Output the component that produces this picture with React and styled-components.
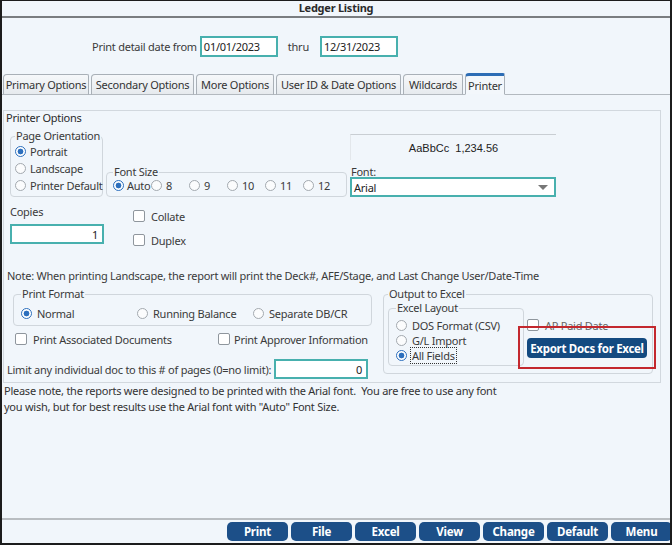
import React from "react";
import styled, { createGlobalStyle } from "styled-components";

const GlobalStyle = createGlobalStyle`
  * { box-sizing: border-box; }
  html, body { margin: 0; padding: 0; background: #f1f6fb; }
  body {
    font-family: "Noto Sans", "Open Sans", sans-serif;
    font-size: 11px;
    letter-spacing: -0.25px;
    color: #3a3a3a;
  }
`;

const Window = styled.div`
  width: 672px;
  height: 545px;
  display: flex;
  flex-direction: column;
  background: #f1f6fb;
  border-style: solid;
  border-color: #1c1c1c;
  border-width: 1px 2px 2px 2px;
  overflow: hidden;
`;

const TitleBar = styled.div`
  height: 17px;
  line-height: 14px;
  text-align: center;
  font-weight: 700;
  font-size: 11px;
  color: #2a2a2a;
  border-bottom: 2px solid #7a7d80;
`;

const DateRow = styled.div`
  display: flex;
  align-items: center;
  padding: 17px 0 15px 90px;
  height: 54px;
`;

const Label = styled.span`
  white-space: nowrap;
  margin-right: ${(p) => p.$gap || 0}px;
`;

const Field = styled.div`
  width: ${(p) => p.$w}px;
  height: ${(p) => p.$h || 21}px;
  border: 2px solid #48b0ae;
  background: #fff;
  padding: 0 4px 0 2px;
  display: flex;
  align-items: center;
  justify-content: ${(p) => (p.$right ? "flex-end" : "flex-start")};
  color: #222;
`;

const TabStrip = styled.div`
  height: 23px;
  display: flex;
  align-items: flex-end;
  gap: 2px;
  padding-left: 1px;
  border-bottom: 1px solid #b3b9bf;
`;

const Tab = styled.div`
  width: ${(p) => p.$w}px;
  height: ${(p) => (p.$active ? 22 : 21)}px;
  margin-bottom: -1px;
  display: flex;
  align-items: center;
  justify-content: center;
  white-space: nowrap;
  color: #333;
  border: 1px solid #a9b0b7;
  border-bottom: ${(p) => (p.$active ? "1px solid #f1f6fb" : "1px solid #b3b9bf")};
  border-top: ${(p) => (p.$active ? "3px solid #2d6db5" : "1px solid #a9b0b7")};
  border-radius: 4px 2px 0 0;
  background: ${(p) =>
    p.$active ? "#f3f7fb" : "linear-gradient(#f6f8fa, #e6eaee)"};
`;

const Content = styled.div`
  flex: 1;
  padding: 15px 0 0 1px;
  display: flex;
  flex-direction: column;
`;

const Panel = styled.div`
  width: 658px;
  height: 273px;
  border: 1px solid #d2d8de;
  padding: 0 0 0 1px;
  display: flex;
  flex-direction: column;
`;

const PanelTitle = styled.div`
  line-height: 14px;
  padding-left: 1px;
  color: #2a2a2a;
`;

const Row = styled.div`
  display: flex;
  align-items: ${(p) => p.$align || "flex-start"};
  gap: ${(p) => p.$gap || 0}px;
  margin-top: ${(p) => p.$mt || 0}px;
  padding-left: ${(p) => p.$pl || 0}px;
`;

const Column = styled.div`
  display: flex;
  flex-direction: column;
  margin-top: ${(p) => p.$mt || 0}px;
  width: ${(p) => (p.$w ? `${p.$w}px` : "auto")};
`;

const Group = styled.fieldset`
  margin: 0 0 0 ${(p) => p.$ml || 0}px;
  min-width: 0;
  width: ${(p) => (p.$w ? `${p.$w}px` : "auto")};
  padding: 0 ${(p) => p.$pr ?? 4}px ${(p) => p.$pb ?? 2}px ${(p) => p.$pl ?? 3}px;
  border: 1px solid #d0d6dc;
  border-radius: 4px;
  align-self: ${(p) => p.$self || "auto"};
`;

const Legend = styled.legend`
  padding: 0 1px;
  line-height: 14px;
  white-space: nowrap;
  color: #3a3a3a;
`;

const RadioItem = styled.div`
  display: flex;
  align-items: center;
  gap: ${(p) => p.$gap ?? 5}px;
  height: ${(p) => p.$h || 17}px;
  width: ${(p) => (p.$w ? `${p.$w}px` : "auto")};
  overflow: ${(p) => (p.$w ? "hidden" : "visible")};
  white-space: nowrap;
  flex-shrink: 0;
  color: ${(p) => (p.$muted ? "#666" : "inherit")};
`;

const Dot = styled.span`
  width: 11px;
  height: 11px;
  border-radius: 50%;
  flex-shrink: 0;
  border: 1px solid ${(p) => (p.$on ? "#2c6fbd" : "#a3a9af")};
  background: ${(p) =>
    p.$on
      ? "radial-gradient(circle, #2c6fbd 0 2.6px, #ffffff 3.2px)"
      : "#fbfcfd"};
`;

const Box = styled.span`
  width: 12px;
  height: 12px;
  flex-shrink: 0;
  border: 1px solid #8f969d;
  border-radius: 2px;
  background: #fff;
`;

const Focus = styled.span`
  outline: 1px dotted #333;
  padding: 0 1px;
`;

const Radio = ({ on, children, w, h, gap }) => (
  <RadioItem $w={w} $h={h} $gap={gap}>
    <Dot $on={on} />
    <span>{children}</span>
  </RadioItem>
);

const Check = ({ children, w, h, gap = 6, muted }) => (
  <RadioItem $w={w} $h={h} $gap={gap} $muted={muted}>
    <Box />
    <span>{children}</span>
  </RadioItem>
);

const Preview = styled.div`
  height: 26px;
  border-top: 1px solid #c9ced3;
  border-left: 1px solid #e3e7eb;
  display: flex;
  align-items: center;
  justify-content: center;
  font-family: "Liberation Sans", Arial, sans-serif;
  font-size: 11px;
  letter-spacing: 0;
  color: #222;
  white-space: pre;
`;

const FontLabel = styled.div`
  line-height: 11px;
  margin-top: 6px;
  padding-left: 1px;
`;

const Select = styled.div`
  height: 20px;
  border: 2px solid #48b0ae;
  background: #fff;
  display: flex;
  align-items: center;
  justify-content: space-between;
  padding: 0 6px 0 2px;
  color: #222;
`;

const Arrow = styled.span`
  width: 0;
  height: 0;
  border-left: 5px solid transparent;
  border-right: 5px solid transparent;
  border-top: 5px solid #777;
`;

const Note = styled.div`
  line-height: 14px;
  padding-left: 2px;
  margin-top: ${(p) => p.$mt || 0}px;
  white-space: pre;
`;

const Footnote = styled.div`
  padding-left: 1px;
  line-height: 16px;
  white-space: pre;
  color: #333;
`;

const Spacer = styled.div`
  flex: 1;
`;

const Footer = styled.div`
  height: 25px;
  border-top: 2px solid #b9bdc1;
  display: flex;
  align-items: flex-start;
  gap: 3px;
  padding: 2px 0 0 225px;
`;

const FooterButton = styled.button`
  flex-shrink: 0;
  width: 61px;
  height: 19px;
  border: none;
  border-radius: 5px;
  background: #1c4f88;
  color: #fff;
  font-family: "Noto Sans", sans-serif;
  font-weight: 700;
  font-size: 11.5px;
  letter-spacing: -0.2px;
  padding: 0;
  line-height: 19px;
`;

const Highlight = styled.div`
  position: relative;
  margin-top: 6px;
  &::after {
    content: "";
    position: absolute;
    inset: -12px -9px -11px -9px;
    border: 2px solid #c3282e;
    pointer-events: none;
  }
`;

const ExportButton = styled.button`
  width: 120px;
  height: 20px;
  border: none;
  border-radius: 4px;
  background: #134a80;
  color: #fff;
  font-family: "Noto Sans", sans-serif;
  font-weight: 700;
  font-size: 11.5px;
  letter-spacing: -0.3px;
  padding: 0;
`;

const tabs = [
  ["Primary Options", 86],
  ["Secondary Options", 103],
  ["More Options", 78],
  ["User ID & Date Options", 125],
  ["Wildcards", 60],
];

const sizes = ["Auto", "8", "9", "10", "11", "12"];

export default function App() {
  return (
    <>
      <GlobalStyle />
      <Window>
        <TitleBar>Ledger Listing</TitleBar>
        <DateRow>
          <Label $gap={3}>Print detail date from</Label>
          <Field $w={78}>01/01/2023</Field>
          <Label style={{ margin: "0 11px 0 10px" }}>thru</Label>
          <Field $w={78}>12/31/2023</Field>
        </DateRow>
        <TabStrip>
          {tabs.map(([t, w]) => (
            <Tab key={t} $w={w}>{t}</Tab>
          ))}
          <Tab $active $w={40}>Printer</Tab>
        </TabStrip>
        <Content>
          <Panel>
            <PanelTitle>Printer Options</PanelTitle>
            <Row $mt={4} $pl={5} $gap={3}>
              <Group $w={93} $pl={4} $pr={0} $pb={2}>
                <Legend>Page Orientation</Legend>
                <Radio on gap={4}>Portrait</Radio>
                <Radio gap={4}>Landscape</Radio>
                <Radio gap={4}>Printer Default</Radio>
              </Group>
              <Group $w={241} $self="flex-end" $pl={6} $pr={4} $pb={5}>
                <Legend>Font Size</Legend>
                <Row>
                  {sizes.map((s, i) => (
                    <Radio key={s} on={i === 0} w={38} h={12} gap={i === 0 ? 3 : 4}>
                      {s}
                    </Radio>
                  ))}
                </Row>
              </Group>
              <Column $w={206} $mt={5}>
                <Preview>{"AaBbCc  1,234.56"}</Preview>
                <FontLabel>Font:</FontLabel>
                <Select>
                  <span>Arial</span>
                  <Arrow />
                </Select>
              </Column>
            </Row>
            <Row $mt={7} $pl={5} $gap={29}>
              <Column $w={94}>
                <Label>Copies</Label>
                <Field $w={94} $h={20} $right style={{ marginTop: 5 }}>
                  1
                </Field>
              </Column>
              <Column>
                <Check h={24}>Collate</Check>
                <Check h={24}>Duplex</Check>
              </Column>
            </Row>
            <Note $mt={17}>
              Note: When printing Landscape, the report will print the Deck#, AFE/Stage, and Last Change User/Date-Time
            </Note>
            <Row $mt={4} $pl={2} $gap={4}>
              <Column $w={372}>
                <Group $w={359} $ml={6} $pl={7} $pb={0}>
                  <Legend>Print Format</Legend>
                  <Row>
                    <Radio on w={116} h={24}>Normal</Radio>
                    <Radio w={116} h={24}>Running Balance</Radio>
                    <Radio w={116} h={24}>Separate DB/CR</Radio>
                  </Row>
                </Group>
                <Row $pl={8}>
                  <Check w={203} h={26}>Print Associated Documents</Check>
                  <Check h={26} gap={4}>Print Approver Information</Check>
                </Row>
                <Row $align="center" $mt={7}>
                  <Label $gap={3}>Limit any individual doc to this # of pages (0=no limit):</Label>
                  <Field $w={94} $h={20} $right>0</Field>
                </Row>
              </Column>
              <Group $w={270} $pl={4} $pb={7}>
                <Legend>Output to Excel</Legend>
                <Row $gap={3}>
                  <Group $w={136} $pl={7} $pb={2}>
                    <Legend>Excel Layout</Legend>
                    <div style={{ height: 3 }} />
                    <Radio h={15} gap={5}>DOS Format (CSV)</Radio>
                    <Radio h={15} gap={5}>G/L Import</Radio>
                    <Radio on h={15} gap={4}>
                      <Focus>All Fields</Focus>
                    </Radio>
                  </Group>
                  <Column $mt={17}>
                    <Check h={14} gap={6} muted>AP Paid Date</Check>
                    <Highlight>
                      <ExportButton>Export Docs for Excel</ExportButton>
                    </Highlight>
                  </Column>
                </Row>
              </Group>
            </Row>
          </Panel>
          <Footnote>
            {"Please note, the reports were designed to be printed with the Arial font.  You are free to use any font\nyou wish, but for best results use the Arial font with \"Auto\" Font Size."}
          </Footnote>
          <Spacer />
        </Content>
        <Footer>
          {["Print", "File", "Excel", "View", "Change", "Default", "Menu"].map((b) => (
            <FooterButton key={b}>{b}</FooterButton>
          ))}
        </Footer>
      </Window>
    </>
  );
}
